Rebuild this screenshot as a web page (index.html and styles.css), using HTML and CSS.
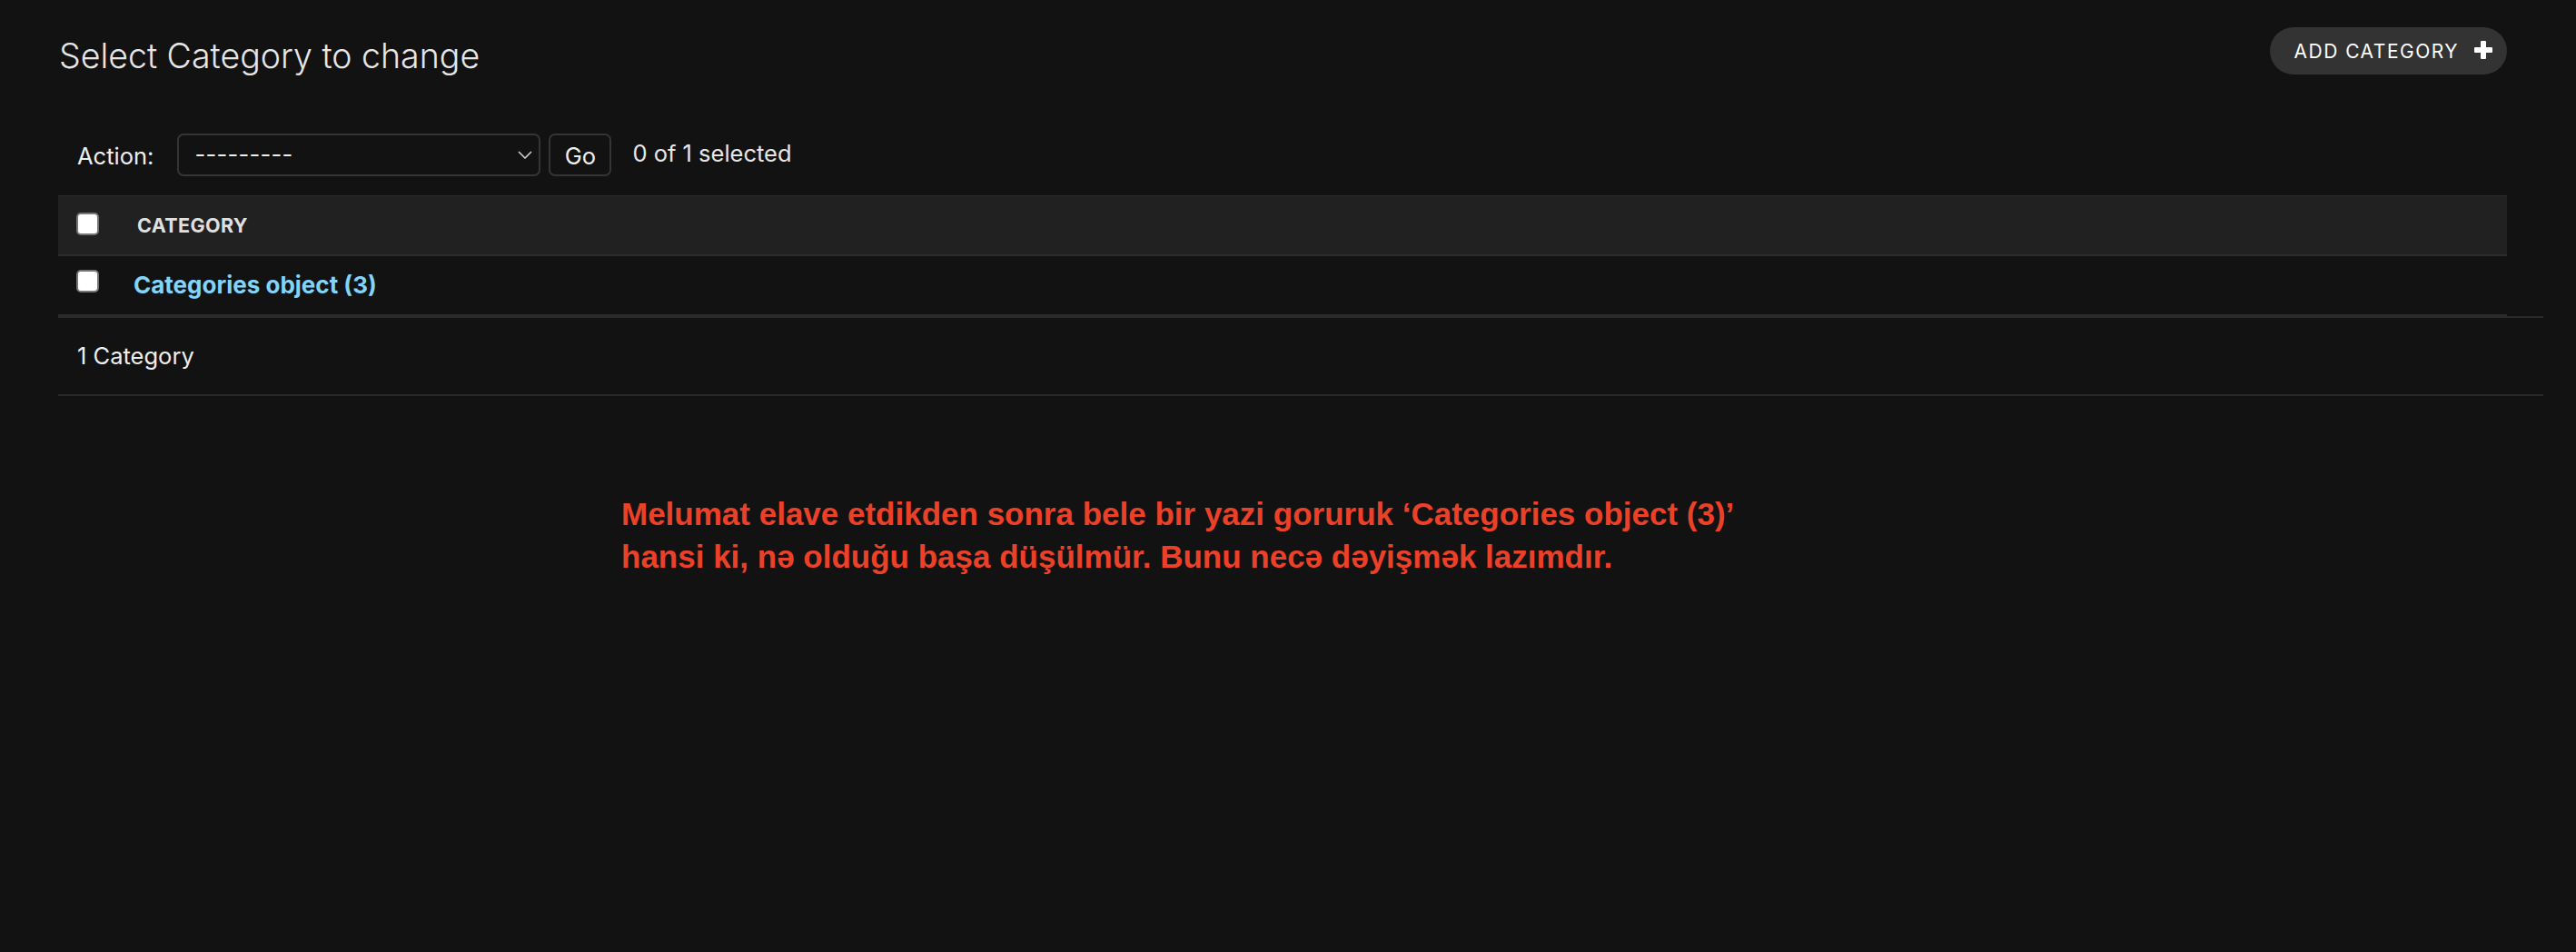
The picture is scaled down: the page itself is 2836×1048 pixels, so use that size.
FILE: index.html
```html
<!DOCTYPE html>
<html lang="az">
<head>
<meta charset="utf-8">
<title>Select Category to change</title>
<link rel="stylesheet" href="styles.css">
</head>
<body>
<div class="page">
  <div class="top">
    <h1 class="title">Select Category to change</h1>
    <a class="addlink" href="#">ADD CATEGORY
      <svg class="plus" width="20" height="20" viewBox="0 0 20 20"><rect x="7" y="0" width="6" height="20" rx="1" fill="#fff"/><rect x="0" y="7" width="20" height="6" rx="1" fill="#fff"/></svg>
    </a>
  </div>
  <div class="changelist">
    <div class="actions">
      <span class="action-label">Action:</span>
      <div class="select">
        <span class="select-text">---------</span>
        <svg class="chevron" width="16" height="9" viewBox="0 0 16 9"><path d="M1 1 L8 8 L15 1" fill="none" stroke="#d0d0d0" stroke-width="1.6"/></svg>
      </div>
      <button class="go">Go</button>
      <span class="counter">0 of 1 selected</span>
    </div>
    <table class="results">
      <thead>
        <tr>
          <th class="cb-cell"><span class="checkbox"></span></th>
          <th class="col">CATEGORY</th>
        </tr>
      </thead>
      <tbody>
        <tr>
          <td class="cb-cell"><span class="checkbox"></span></td>
          <td class="col"><a class="obj-link" href="#">Categories object (3)</a></td>
        </tr>
      </tbody>
    </table>
    <p class="paginator">1 Category</p>
  </div>
  <p class="note">Melumat elave etdikden sonra bele bir yazi goruruk ‘Categories object (3)’<br>hansi ki, nə olduğu başa düşülmür. Bunu necə dəyişmək lazımdır.</p>
</div>
</body>
</html>
```
FILE: styles.css
```css
html, body {
  margin: 0;
  padding: 0;
  background: #121212;
}
body {
  font-family: Inter, "Noto Sans", sans-serif;
  color: #eeeeee;
  min-height: 1048px;
}
.page {
  padding: 0 36px 0 64px;
}
.top {
  display: flex;
  justify-content: space-between;
  align-items: flex-start;
  width: 2696px;
  padding-top: 30px;
}
.title {
  margin: 9px 0 0 1px;
  font-size: 37.5px;
  line-height: 45px;
  font-weight: 300;
  color: #e6e6e6;
}
.addlink {
  display: flex;
  align-items: center;
  height: 52px;
  box-sizing: border-box;
  padding: 0 16px 0 26px;
  border-radius: 26px;
  background: #333333;
  color: #ffffff;
  text-decoration: none;
  font-size: 21px;
  letter-spacing: 1.5px;
  font-weight: 400;
  margin-right: 0;
}
.plus {
  margin-left: 17px;
  margin-top: -2px;
}
.changelist {
  margin-top: 63px;
}
.actions {
  display: flex;
  align-items: center;
  height: 47px;
  padding-left: 21px;
  font-size: 25.5px;
}
.action-label {
  color: #eeeeee;
  margin-right: 26px;
  margin-top: 2px;
}
.select {
  display: flex;
  align-items: center;
  justify-content: space-between;
  box-sizing: border-box;
  width: 400px;
  height: 47px;
  border: 2px solid #353535;
  border-radius: 7px;
  padding: 0 7px 0 17px;
  background: #121212;
}
.select-text {
  color: #eeeeee;
  letter-spacing: 0.3px;
  margin-top: -2px;
}
.go {
  box-sizing: border-box;
  width: 69px;
  height: 47px;
  margin-left: 9px;
  border: 2px solid #353535;
  border-radius: 7px;
  background: #121212;
  color: #eeeeee;
  font-family: Inter, "Noto Sans", sans-serif;
  font-size: 25.5px;
  padding: 2px 0 0;
}
.counter {
  margin-left: 23px;
  margin-top: -4px;
  color: #e6e6e6;
}
.results {
  margin-top: 21px;
  width: 2696px;
  border-collapse: collapse;
}
.results th, .results td {
  padding: 0;
  text-align: left;
  vertical-align: middle;
}
.results thead tr {
  background: #212121;
  height: 65px;
  border-top: 1px solid #2a2a2a;
  border-bottom: 2px solid #2c2c2c;
}
.results tbody tr {
  height: 66px;
  border-bottom: 2px solid #2c2c2c;
}
.cb-cell {
  width: 67px;
  padding-left: 20px !important;
}
.checkbox {
  display: block;
  box-sizing: border-box;
  width: 25px;
  height: 25px;
  border: 2px solid #767676;
  border-radius: 5px;
  background: #ffffff;
}
.results thead .checkbox {
  margin-top: -2px;
}
.results tbody .checkbox {
  margin-top: -8px;
}
.col {
  font-size: 21.5px;
}
th.col {
  font-weight: 700;
  color: #e0e0e0;
  letter-spacing: 0.4px;
}
.obj-link {
  color: #81d4fa;
  font-weight: 700;
  font-size: 26px;
  text-decoration: none;
  margin-left: -4px;
}
.paginator {
  margin: 0;
  box-sizing: border-box;
  height: 88px;
  width: 2736px;
  border-top: 2px solid #2a2a2a;
  border-bottom: 2px solid #2a2a2a;
  padding-left: 21px;
  display: flex;
  align-items: center;
  font-size: 25.5px;
  color: #eeeeee;
}
.note {
  margin: 106px 0 0 620px;
  font-family: "Liberation Sans", Arial, sans-serif;
  font-weight: 700;
  font-size: 35px;
  line-height: 47px;
  color: #ea4128;
}
```
